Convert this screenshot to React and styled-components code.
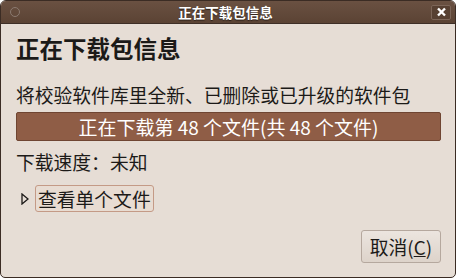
import React from "react";
import styled, { createGlobalStyle } from "styled-components";

const Global = createGlobalStyle`
    html, body {
        margin: 0;
        padding: 0;
        background: #ffffff;
    }
    body {
        font-family: "Noto Sans CJK SC", "DejaVu Sans", sans-serif;
    }
`;

const Frame = styled.div`
    width: 456px;
    height: 278px;
    box-sizing: border-box;
    display: flex;
    flex-direction: column;
    background: #e6ddd5;
    border: 1px solid #3b2c24;
    border-radius: 6px 6px 5px 5px;
    overflow: hidden;
`;

const TitleBar = styled.div`
    height: 22px;
    flex: 0 0 22px;
    display: flex;
    align-items: center;
    justify-content: space-between;
    padding: 0 4px 0 9px;
    background: linear-gradient(#6a5142, #5b4334);
    border-bottom: 1px solid #3e2f27;
`;

const MenuDot = styled.div`
    width: 8px;
    height: 8px;
    border-radius: 50%;
    border: 1.5px solid #8b7a70;
`;

const TitleText = styled.div`
    color: #ffffff;
    font-size: 13.5px;
    font-weight: 700;
    text-shadow: 0 1px 1px #2a1e18;
`;

const CloseButton = styled.div`
    width: 20px;
    height: 15px;
    box-sizing: border-box;
    display: flex;
    align-items: center;
    justify-content: center;
    border: 1px solid #7c6558;
    border-radius: 2px;
    background: #574032;
`;

const Body = styled.div`
    flex: 1;
    display: flex;
    flex-direction: column;
    padding: 9px 14px 14px 15px;
    color: #1c1a18;
`;

const Heading = styled.div`
    font-size: 23.5px;
    font-weight: 700;
    line-height: 30px;
`;

const Line = styled.div`
    font-size: 18.8px;
    line-height: 24px;
    margin-top: ${(p) => p.$top || 0}px;
`;

const Bar = styled.div`
    margin-top: 5px;
    height: 29px;
    box-sizing: border-box;
    display: flex;
    align-items: center;
    justify-content: center;
    background: #8f5d46;
    border: 1px solid #6f4532;
    border-radius: 2px;
    color: #ffffff;
    font-size: 19px;
`;

const Expander = styled.div`
    margin-top: 11px;
    display: flex;
    align-items: center;
    gap: 6px;
    padding-left: 5px;
`;

const Button = styled.div`
    box-sizing: border-box;
    height: ${(p) => p.$h}px;
    padding: 0 ${(p) => p.$px}px;
    display: flex;
    align-items: center;
    font-size: 18.8px;
    border: 1px solid ${(p) => (p.$focus ? "#c49a86" : "#b5a89e")};
    border-radius: 3px;
    background: ${(p) => (p.$focus ? "#e8dcd2" : "linear-gradient(#ece5df, #ddd3ca)")};
`;

const Footer = styled.div`
    margin-top: auto;
    display: flex;
    justify-content: flex-end;
`;

const Mnemonic = styled.span`
    text-decoration: underline;
`;

export default function App() {
    return (
        <>
            <Global />
            <Frame>
                <TitleBar>
                    <MenuDot />
                    <TitleText>正在下载包信息</TitleText>
                    <CloseButton>
                        <svg width="11" height="10" viewBox="0 0 11 10">
                            <path d="M2 1.5 L9 8.5 M9 1.5 L2 8.5" stroke="#ffffff" strokeWidth="2.4" />
                        </svg>
                    </CloseButton>
                </TitleBar>
                <Body>
                    <Heading>正在下载包信息</Heading>
                    <Line $top={20}>将校验软件库里全新、已删除或已升级的软件包</Line>
                    <Bar>正在下载第 48 个文件(共 48 个文件)</Bar>
                    <Line $top={9}>下载速度：未知</Line>
                    <Expander>
                        <svg width="8" height="12" viewBox="0 0 8 12">
                            <path d="M1 1 L7 6 L1 11 Z" fill="none" stroke="#1c1a18" strokeWidth="1.3" />
                        </svg>
                        <Button $h={27} $px={2} $focus>查看单个文件</Button>
                    </Expander>
                    <Footer>
                        <Button $h={33} $px={8}>取消(<Mnemonic>C</Mnemonic>)</Button>
                    </Footer>
                </Body>
            </Frame>
        </>
    );
}
